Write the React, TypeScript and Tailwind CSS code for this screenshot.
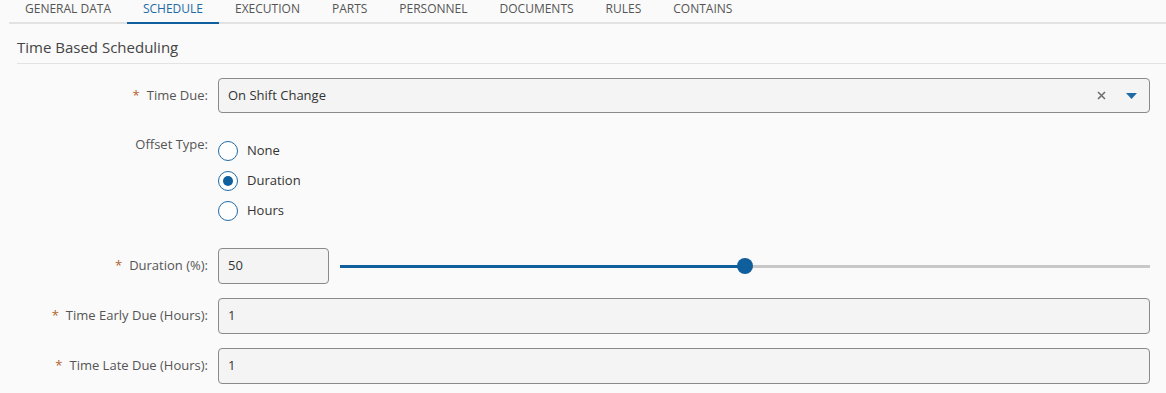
import React from 'react'

const tabs = ['GENERAL DATA', 'SCHEDULE', 'EXECUTION', 'PARTS', 'PERSONNEL', 'DOCUMENTS', 'RULES', 'CONTAINS']

function Label({ text, required }: { text: string; required?: boolean }) {
  return (
    <div className="w-[208px] shrink-0 text-right text-[13px] text-[#555]">
      {required && <span className="text-[#b4632a] mr-[7px]">*</span>}
      {text}
    </div>
  )
}

function Radio({ label, checked }: { label: string; checked?: boolean }) {
  return (
    <div className="flex items-center h-[30px]">
      <span className="w-[20px] h-[20px] rounded-full border-[1.5px] border-[#1f6aa5] bg-white flex items-center justify-center">
        {checked && <span className="w-[10px] h-[10px] rounded-full bg-[#0f5f9c]" />}
      </span>
      <span className="ml-[9px] text-[13px] text-[#333]">{label}</span>
    </div>
  )
}

function TextBox({ value, className }: { value: string; className?: string }) {
  return (
    <div
      className={`h-[36px] rounded-[4px] border border-[#8a8a8a] bg-[#f4f4f4] flex items-center px-[9px] text-[13px] text-[#333] ${className ?? ''}`}
    >
      {value}
    </div>
  )
}

export default function App() {
  const pct = 50
  return (
    <div className="w-[1166px] h-[393px] bg-[#fafafa] overflow-hidden" style={{ fontFamily: '"Open Sans", "Noto Sans", sans-serif' }}>
      {/* tabs */}
      <div className="ml-[9px] flex border-b-2 border-[#e2e2e2] h-[24px]">
        {tabs.map((t, i) => (
          <div
            key={t}
            className={`px-[16px] text-[12px] leading-[18px] -mb-[2px] ${
              i === 1 ? 'text-[#1f6aa5] border-b-2 border-[#0f5f9c]' : 'text-[#555] border-b-2 border-transparent'
            }`}
          >
            {t}
          </div>
        ))}
      </div>

      <div className="ml-[17px] mt-[13px] pb-[6px] border-b border-[#e3e3e3] text-[15px] text-[#444] leading-[20px]">
        Time Based Scheduling
      </div>

      <div className="flex flex-col pr-[16px]">
        {/* Time Due */}
        <div className="flex items-center gap-[10px] mt-[14px]">
          <Label text="Time Due:" required />
          <div className="flex-1 h-[35px] rounded-[4px] border border-[#8a8a8a] bg-[#f4f4f4] flex items-center pl-[9px] pr-[12px] text-[13px] text-[#333]">
            <span className="flex-1">On Shift Change</span>
            <svg width="9" height="9" viewBox="0 0 9 9" className="mr-[20px]">
              <path d="M1 1 L8 8 M8 1 L1 8" stroke="#6e6e6e" strokeWidth="1.6" />
            </svg>
            <svg width="11" height="6" viewBox="0 0 11 6">
              <path d="M0 0 L11 0 L5.5 6 Z" fill="#1f6aa5" />
            </svg>
          </div>
        </div>

        {/* Offset type */}
        <div className="flex gap-[10px] mt-[28px]">
          <div className="-mt-[6px]"><Label text="Offset Type:" /></div>
          <div className="-mt-[5px]">
            <Radio label="None" />
            <Radio label="Duration" checked />
            <Radio label="Hours" />
          </div>
        </div>

        {/* Duration */}
        <div className="flex items-center gap-[10px] mt-[22px]">
          <Label text="Duration (%):" required />
          <TextBox value="50" className="w-[111px]" />
          <div className="flex-1 ml-[1px] relative h-[16px] flex items-center">
            <div className="w-full h-[3px] bg-[#c8c8c8]" />
            <div className="absolute left-0 h-[3px] bg-[#0f5f9c]" style={{ width: `${pct}%` }} />
            <div
              className="absolute w-[16px] h-[16px] rounded-full bg-[#0f5f9c] -translate-x-1/2"
              style={{ left: `${pct}%` }}
            />
          </div>
        </div>

        <div className="flex items-center gap-[10px] mt-[14px]">
          <Label text="Time Early Due (Hours):" required />
          <TextBox value="1" className="flex-1" />
        </div>

        <div className="flex items-center gap-[10px] mt-[14px]">
          <Label text="Time Late Due (Hours):" required />
          <TextBox value="1" className="flex-1" />
        </div>
      </div>
    </div>
  )
}
